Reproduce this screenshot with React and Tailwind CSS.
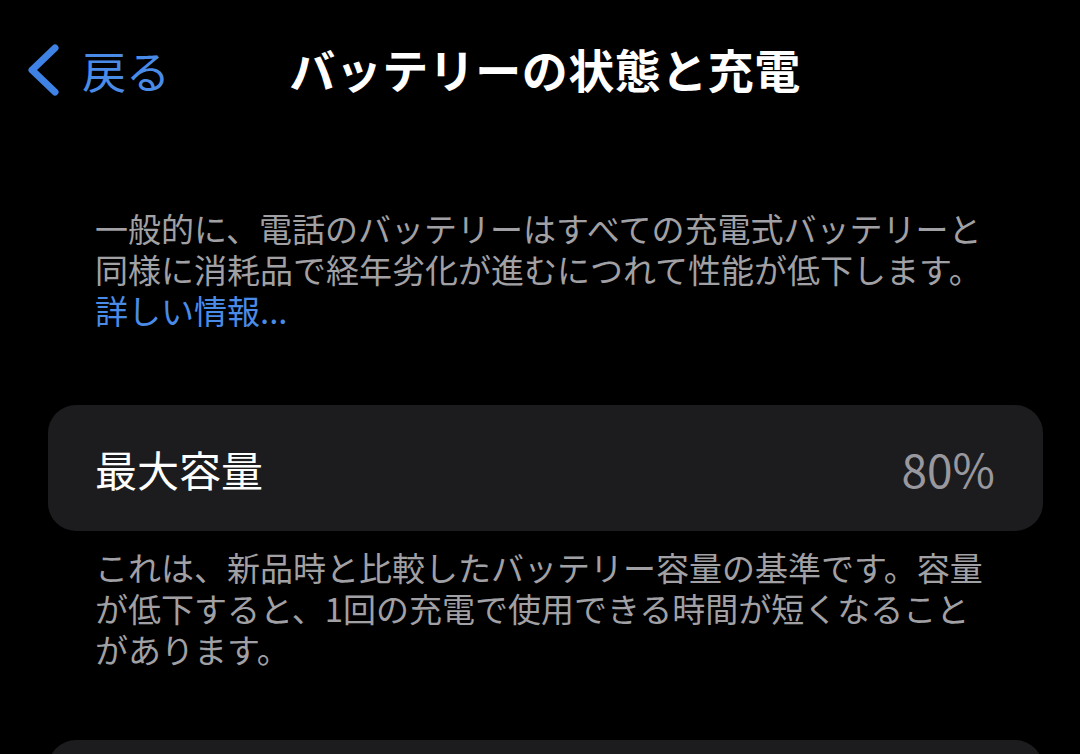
import React from 'react';

const FONT = { fontFamily: '"Noto Sans CJK JP", "Noto Sans", sans-serif' };

export default function App() {
  return (
    <div className="w-[1080px] h-[754px] overflow-hidden bg-black text-white" style={FONT}>
      {/* Nav bar */}
      <div className="relative h-[140px]">
        <div className="absolute left-[26px] top-[44px] flex items-center gap-[22px]">
          <svg width="34" height="52" viewBox="0 0 34 52" fill="none">
            <path d="M29 4 L6 26 L29 48" stroke="#3f82e6" strokeWidth="7" strokeLinecap="round" strokeLinejoin="round" />
          </svg>
          <span className="text-[44px] leading-none text-[#4a8be8]">戻る</span>
        </div>
        <div className="absolute left-0 right-0 top-[38px] flex justify-center pl-[10px]">
          <span className="text-[46px] font-bold leading-[60px] tracking-[0.5px]">バッテリーの状態と充電</span>
        </div>
      </div>

      <div className="px-[95px] pt-[68px] text-[33px] leading-[41px] text-[#a0a0a5]">
        <p>一般的に、電話のバッテリーはすべての充電式バッテリーと<br />同様に消耗品で経年劣化が進むにつれて性能が低下します。</p>
        <p className="text-[#4a8be8]">詳しい情報...</p>
      </div>

      <div className="ml-[48px] mr-[37px] mt-[74px] h-[126px] rounded-[28px] bg-[#1c1c1e] flex items-center justify-between pl-[47px] pr-[48px]">
        <span className="text-[42px] text-white">最大容量</span>
        <span className="text-[46px] text-[#98989e]">80%</span>
      </div>

      <div className="px-[95px] pt-[16px] text-[33px] leading-[41px] text-[#a0a0a5]">
        <p>これは、新品時と比較したバッテリー容量の基準です。容量<br />が低下すると、1回の充電で使用できる時間が短くなること<br />があります。</p>
      </div>

      <div className="ml-[48px] mr-[37px] mt-[70px] h-[120px] rounded-[28px] bg-[#1c1c1e]" />
    </div>
  );
}
